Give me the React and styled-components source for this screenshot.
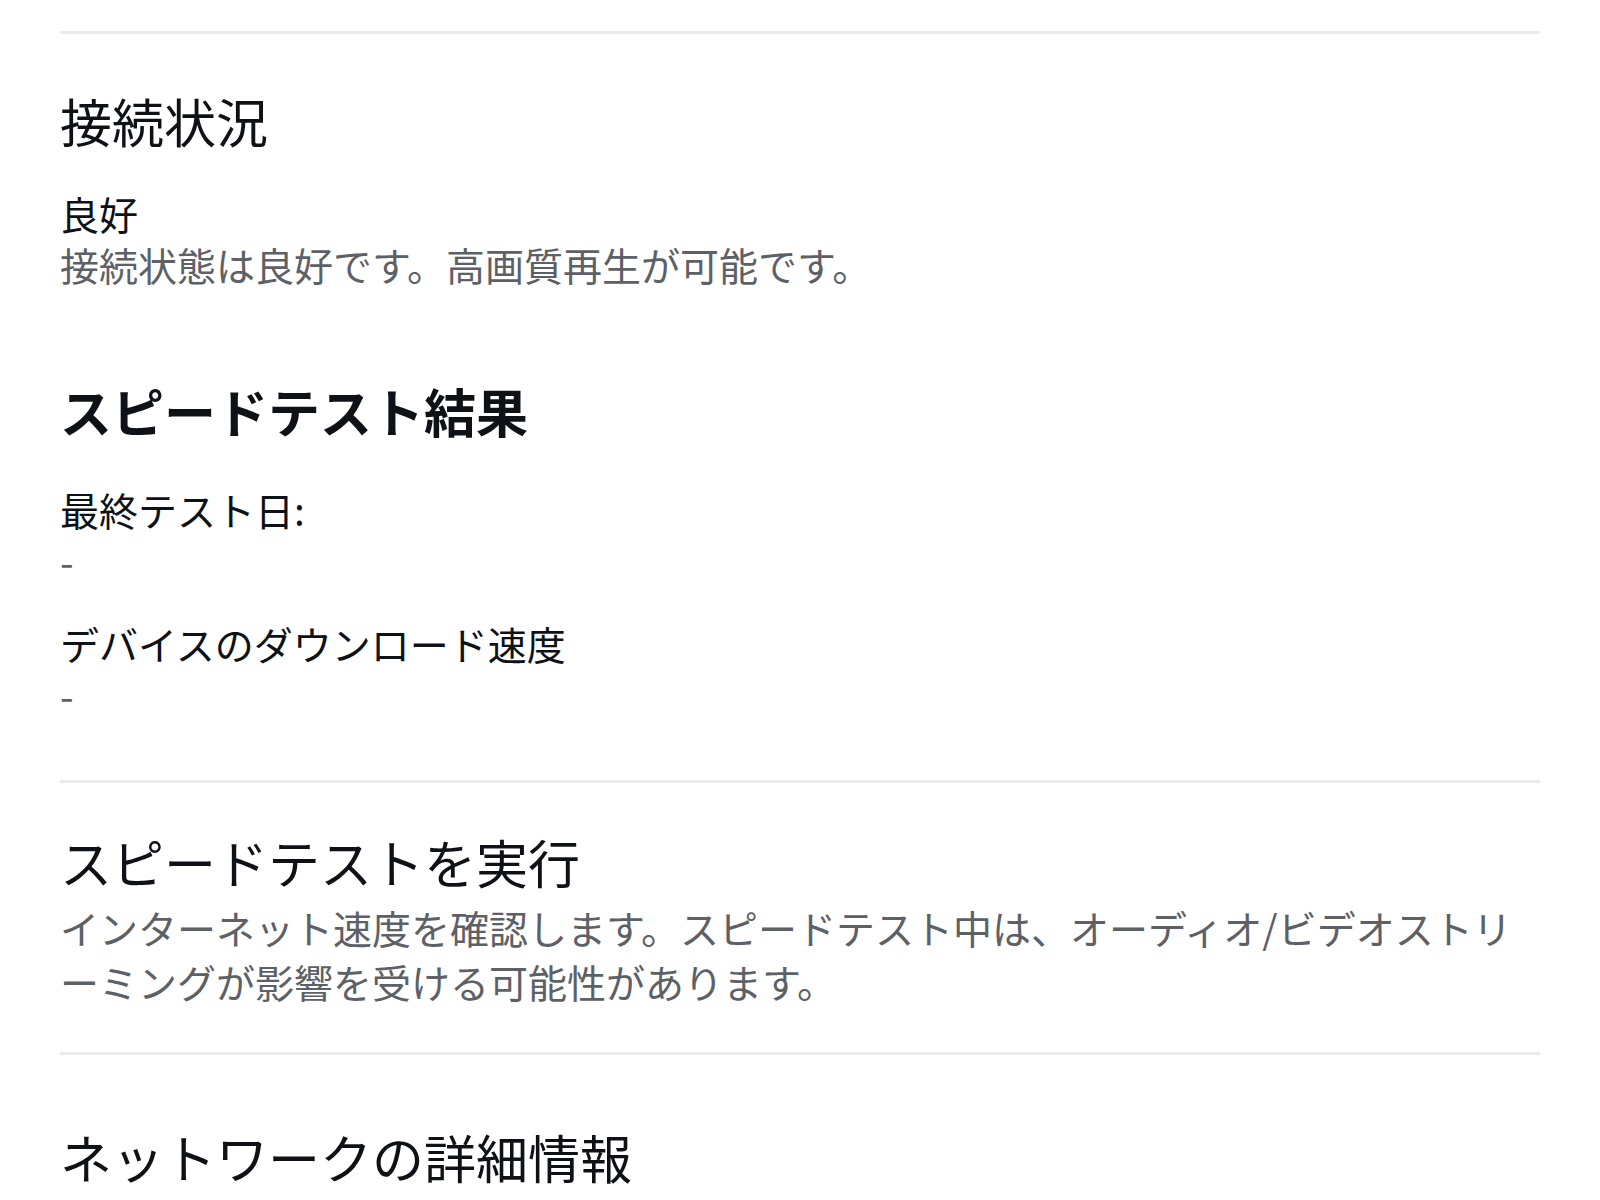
import React from "react";
import styled, { createGlobalStyle } from "styled-components";

const GlobalStyle = createGlobalStyle`
  html, body {
    margin: 0;
    padding: 0;
    background: #ffffff;
  }
  body {
    font-family: "Noto Sans CJK JP", "Noto Sans", sans-serif;
    color: #0e1217;
  }
`;

const Page = styled.div`
  padding: 31px 60px 0;
  display: flex;
  flex-direction: column;
`;

const Divider = styled.hr`
  margin: 0;
  border: none;
  height: 3px;
  background: #e8eaeb;
`;

const Section = styled.section`
  display: flex;
  flex-direction: column;
  padding-top: ${(p) => p.$top || 0}px;
  padding-bottom: ${(p) => p.$bottom || 0}px;
`;

const Heading = styled.h2`
  margin: 0;
  font-size: 52px;
  line-height: 72px;
  font-weight: ${(p) => (p.$bold ? 700 : 400)};
  color: #0e1217;
`;

const Field = styled.div`
  display: flex;
  flex-direction: column;
  margin-top: ${(p) => p.$gap || 0}px;
`;

const Label = styled.div`
  font-size: 39px;
  line-height: 50px;
  color: #0e1217;
`;

const Value = styled.div`
  font-size: 39px;
  line-height: 52px;
  color: #5d6166;
`;

const Desc = styled.p`
  margin: 2px 0 0;
  font-size: 39px;
  line-height: 54px;
  color: #5d6166;
  line-break: loose;
`;

export default function App() {
  return (
    <>
      <GlobalStyle />
      <Page>
        <Divider />
        <Section $top={51} $bottom={85}>
          <Heading>接続状況</Heading>
          <Field $gap={31}>
            <Label>良好</Label>
            <Value>接続状態は良好です。高画質再生が可能です。</Value>
          </Field>
        </Section>
        <Section $bottom={60}>
          <Heading $bold>スピードテスト結果</Heading>
          <Field $gap={37}>
            <Label>最終テスト日:</Label>
            <Value>-</Value>
          </Field>
          <Field $gap={32}>
            <Label>デバイスのダウンロード速度</Label>
            <Value>-</Value>
          </Field>
        </Section>
        <Divider />
        <Section $top={43} $bottom={44}>
          <Heading>スピードテストを実行</Heading>
          <Desc>
            インターネット速度を確認します。スピードテスト中は、オーディオ/ビデオストリーミングが影響を受ける可能性があります。
          </Desc>
        </Section>
        <Divider />
        <Section $top={66}>
          <Heading>ネットワークの詳細情報</Heading>
        </Section>
      </Page>
    </>
  );
}
